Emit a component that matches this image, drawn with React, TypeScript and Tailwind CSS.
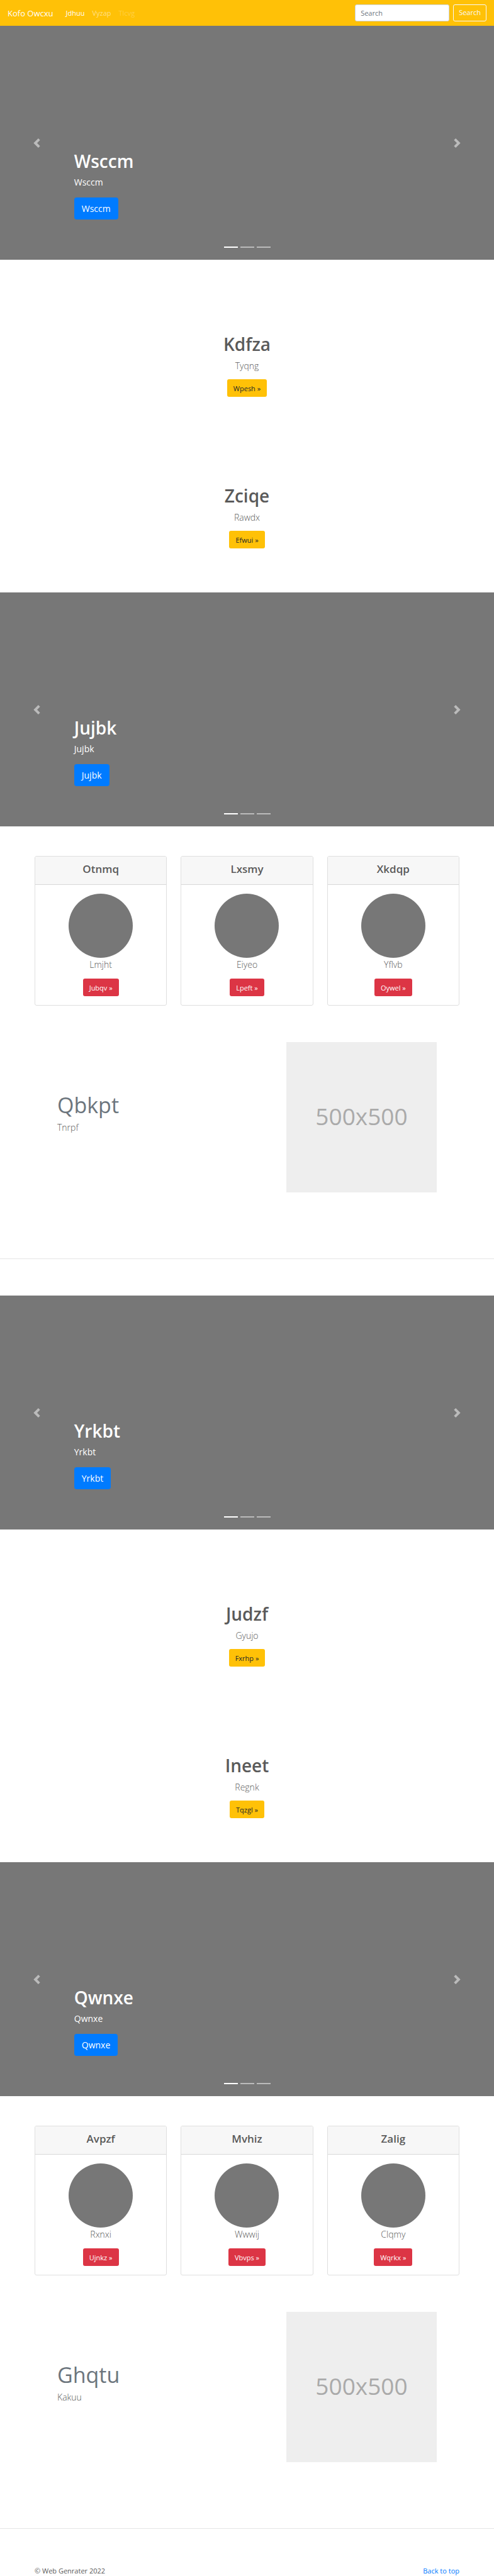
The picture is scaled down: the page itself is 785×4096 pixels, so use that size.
import React from "react";

type Entry = { title: string; text: string; action: string };

type Block = {
  id: string;
  firstSlide: string;
  features: Entry[];
  secondSlide: string;
  cards: Entry[];
  headline: string;
  lead: string;
};

const blocks: Block[] = [
  {
    id: "one",
    firstSlide: "Wsccm",
    features: [
      { title: "Kdfza", text: "Tyqng", action: "Wpesh" },
      { title: "Zciqe", text: "Rawdx", action: "Efwui" },
    ],
    secondSlide: "Jujbk",
    cards: [
      { title: "Otnmq", text: "Lmjht", action: "Jubqv" },
      { title: "Lxsmy", text: "Eiyeo", action: "Lpeft" },
      { title: "Xkdqp", text: "Yflvb", action: "Oywel" },
    ],
    headline: "Qbkpt",
    lead: "Tnrpf",
  },
  {
    id: "two",
    firstSlide: "Yrkbt",
    features: [
      { title: "Judzf", text: "Gyujo", action: "Fxrhp" },
      { title: "Ineet", text: "Regnk", action: "Tqzgl" },
    ],
    secondSlide: "Qwnxe",
    cards: [
      { title: "Avpzf", text: "Rxnxi", action: "Ujnkz" },
      { title: "Mvhiz", text: "Wwwij", action: "Vbvps" },
      { title: "Zalig", text: "Clqmy", action: "Wqrkx" },
    ],
    headline: "Ghqtu",
    lead: "Kakuu",
  },
];

function Navbar() {
  return (
    <nav className="flex h-[41px] items-center bg-[#ffc107] px-3 text-white">
      <a href="#" className="mr-4 text-[13px] leading-[22px]">
        Kofo Owcxu
      </a>
      <div className="flex flex-1 items-center gap-3 pl-1 text-[11px] leading-[17px]">
        <a href="#">Jdhuu</a>
        <a href="#" className="text-white/50">
          Vyzap
        </a>
        <a href="#" aria-disabled="true" className="text-white/25">
          Tlcvg
        </a>
      </div>
      <form className="flex items-center gap-[6px] text-[11px]" onSubmit={(e) => e.preventDefault()}>
        <input
          type="search"
          aria-label="Search"
          placeholder="Search"
          className="h-[27px] w-[150px] rounded-[3px] border border-[#ced4da] bg-white px-2 text-[#495057] placeholder:text-[#6c757d]"
        />
        <button type="submit" className="h-[27px] rounded-[3px] border border-[#f8f9fa] px-2 text-[#f8f9fa]">
          Search
        </button>
      </form>
    </nav>
  );
}

function Carousel({ label }: { label: string }) {
  return (
    <section className="relative flex h-[372px] flex-col items-start justify-end bg-[#777] pb-16 pl-[15%] text-white">
      <h1 className="text-[28px] font-semibold leading-[35px]">{label}</h1>
      <p className="mt-[5px] text-[14px] leading-[22px]">{label}</p>
      <a
        href="#"
        className="mt-[13px] flex h-[35px] items-center rounded-[4px] bg-[#007bff] px-3 text-[14px] leading-[22px]"
      >
        {label}
      </a>
      <button
        type="button"
        aria-label="Previous"
        className="absolute inset-y-0 left-0 flex w-[15%] items-center justify-center opacity-50"
      >
        <svg viewBox="0 0 8 8" className="size-[15px] fill-white">
          <path d="M5.25 0l-4 4 4 4 1.5-1.5-2.5-2.5 2.5-2.5-1.5-1.5z" />
        </svg>
      </button>
      <button
        type="button"
        aria-label="Next"
        className="absolute inset-y-0 right-0 flex w-[15%] items-center justify-center opacity-50"
      >
        <svg viewBox="0 0 8 8" className="size-[15px] fill-white">
          <path d="M2.75 0l-1.5 1.5 2.5 2.5-2.5 2.5 1.5 1.5 4-4-4-4z" />
        </svg>
      </button>
      <div className="absolute inset-x-0 bottom-[19px] flex justify-center gap-1">
        <button type="button" aria-label="Slide 1" className="h-[2px] w-[22px] bg-white" />
        <button type="button" aria-label="Slide 2" className="h-[2px] w-[22px] bg-white/50" />
        <button type="button" aria-label="Slide 3" className="h-[2px] w-[22px] bg-white/50" />
      </div>
    </section>
  );
}

function Features({ items }: { items: Entry[] }) {
  return (
    <section className="flex flex-col gap-[140px] pt-[117px] pb-[70px]">
      {items.map((item) => (
        <div key={item.title} className="flex flex-col items-center">
          <h2 className="text-[28px] font-semibold leading-[35px]">{item.title}</h2>
          <p className="mt-[6px] text-[14px] font-light leading-[22px]">{item.text}</p>
          <a
            href="#"
            className="mt-[10px] flex h-7 items-center rounded-[3px] bg-[#ffc107] px-[10px] text-[11px] leading-[17px] text-[#212529]"
          >
            {item.action} »
          </a>
        </div>
      ))}
    </section>
  );
}

function Cards({ items }: { items: Entry[] }) {
  return (
    <section className="grid grid-cols-3 gap-[22px] px-[55px] pt-[47px]">
      {items.map((item) => (
        <article
          key={item.title}
          className="overflow-hidden rounded-[3px] border border-[#dfdfdf] bg-white text-center"
        >
          <h4 className="border-b border-[#d8d8d8] bg-[#f7f7f7] pt-[9px] pb-[14px] text-[17px] font-semibold leading-[21px]">
            {item.title}
          </h4>
          <div className="flex flex-col items-center py-[14px]">
            <div className="size-[102px] rounded-full bg-[#777]" />
            <p className="text-[14px] font-light leading-[22px]">{item.text}</p>
            <a
              href="#"
              className="mt-[11px] flex h-7 items-center rounded-[3px] bg-[#dc3545] px-[10px] text-[11px] leading-[17px] text-white"
            >
              {item.action} »
            </a>
          </div>
        </article>
      ))}
    </section>
  );
}

function Featurette({ headline, lead }: { headline: string; lead: string }) {
  return (
    <section className="flex items-start justify-between px-[91px] pt-[58px] pb-[105px]">
      <div className="pt-[79px]">
        <h2 className="text-[34px] leading-[43px] text-[#6c757d]">{headline}</h2>
        <p className="mt-[3px] text-[14px] font-light leading-[22px]">{lead}</p>
      </div>
      <div className="flex size-[239px] items-center justify-center bg-[#eee] pb-1 text-[37px] leading-[44px] text-[#aaa]">
        500x500
      </div>
    </section>
  );
}

export default function App() {
  return (
    <div className="bg-white font-['Open_Sans','Noto_Sans',sans-serif] text-[#5a5a5a]">
      <Navbar />
      <main>
        {blocks.map((block) => (
          <React.Fragment key={block.id}>
            <Carousel label={block.firstSlide} />
            <Features items={block.features} />
            <Carousel label={block.secondSlide} />
            <Cards items={block.cards} />
            <Featurette headline={block.headline} lead={block.lead} />
            <hr className="mb-[58px] border-[#e5e5e5]" />
          </React.Fragment>
        ))}
      </main>
      <footer className="flex justify-between px-[55px] text-[11px] leading-[17px]">
        <p>© Web Genrater 2022</p>
        <a href="#" className="text-[#007bff]">
          Back to top
        </a>
      </footer>
    </div>
  );
}
